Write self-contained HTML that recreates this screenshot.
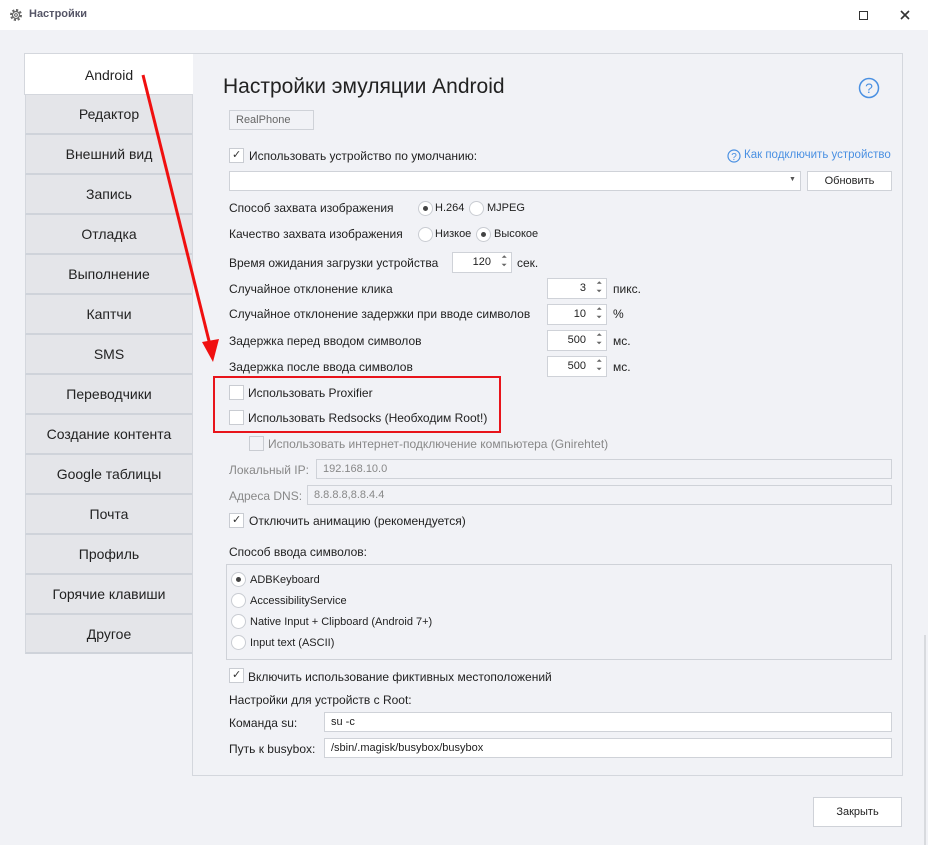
<!DOCTYPE html>
<html><head><meta charset="utf-8"><style>
*{box-sizing:border-box;margin:0;padding:0}
body{width:928px;height:845px;background:#f1f2f6;font-family:"Liberation Sans","DejaVu Sans",sans-serif;font-size:12px;color:#222;position:relative;overflow:hidden}
.a{position:absolute;white-space:nowrap}
.tb{position:absolute;left:0;top:0;width:928px;height:30px;background:#fff}
.tab{position:absolute;left:25px;width:167px;height:40px;background:#e4e5e9;border-bottom:2px solid #cfd3da;border-left:1px solid #d4d7dd;text-align:center;line-height:38px;font-size:14px;color:#222}
.cb{position:absolute;width:15px;height:15px;background:#fff;border:1px solid #c9ccd2}
.cb.c::after{content:"✓";position:absolute;left:2px;top:-1px;font-size:11px;color:#333}
.rb{position:absolute;width:15px;height:15px;border-radius:50%;background:#fff;border:1px solid #c9ccd2}
.rb.c::after{content:"";position:absolute;left:4px;top:4px;width:5px;height:5px;border-radius:50%;background:#444}
.in{position:absolute;height:20px;background:#fff;border:1px solid #cfd2d8;padding-left:6px;line-height:18px;font-size:11px}
.in.d{background:#f1f2f6;color:#888}
.sp{position:absolute;width:60px;height:21px;background:#fff;border:1px solid #cfd2d8;text-align:right;padding-right:20px;line-height:19px;font-size:11px}
.sp::after{content:"⏶\A⏷";white-space:pre;position:absolute;right:4px;top:1px;font-size:7px;line-height:8px;color:#666}
.btn{position:absolute;background:#fff;border:1px solid #cfd2d8;text-align:center;font-size:11px}
</style></head><body>
<div class="tb"></div>
<svg class="a" style="left:9px;top:8px" width="14" height="14" viewBox="0 0 14 14"><circle cx="7" cy="7" r="5" fill="none" stroke="#666" stroke-width="2" stroke-dasharray="2.2 1.7"/><circle cx="7" cy="7" r="3.5" fill="none" stroke="#666" stroke-width="1.2"/><circle cx="7" cy="7" r="1.4" fill="none" stroke="#666" stroke-width="1"/></svg>
<div class="a" style="left:29px;top:8px;font-size:11px;font-weight:bold;color:#556">Настройки</div>
<div class="a" style="left:859px;top:11px;width:9px;height:9px;border:1.5px solid #333"></div>
<svg class="a" style="left:900px;top:10px" width="10" height="10"><path d="M1 1L9 9M9 1L1 9" stroke="#333" stroke-width="1.6"/></svg>

<div class="a" style="left:192px;top:53px;width:711px;height:723px;border:1px solid #d4d7dd;background:#f1f2f6"></div>
<div class="a" style="left:24px;top:53px;width:169px;height:42px;background:#fff;border:1px solid #d4d7dd;border-right:none;text-align:center;line-height:42px;font-size:14px">Android</div>
<div class="tab" style="top:95px">Редактор</div>
<div class="tab" style="top:135px">Внешний вид</div>
<div class="tab" style="top:175px">Запись</div>
<div class="tab" style="top:215px">Отладка</div>
<div class="tab" style="top:255px">Выполнение</div>
<div class="tab" style="top:295px">Каптчи</div>
<div class="tab" style="top:335px">SMS</div>
<div class="tab" style="top:375px">Переводчики</div>
<div class="tab" style="top:415px">Создание контента</div>
<div class="tab" style="top:455px">Google таблицы</div>
<div class="tab" style="top:495px">Почта</div>
<div class="tab" style="top:535px">Профиль</div>
<div class="tab" style="top:575px">Горячие клавиши</div>
<div class="tab" style="top:615px;height:39px">Другое</div>

<div class="a" style="left:223px;top:75px;font-size:21px;color:#222">Настройки эмуляции Android</div>
<svg class="a" style="left:858px;top:77px" width="22" height="22"><circle cx="11" cy="11" r="9.5" fill="none" stroke="#4a90e2" stroke-width="1.5"/><text x="11" y="16" text-anchor="middle" font-size="14" fill="#4a90e2" font-family="Liberation Sans">?</text></svg>
<div class="in d" style="left:229px;top:110px;width:85px;height:20px;color:#666">RealPhone</div>

<div class="cb c" style="left:229px;top:148px"></div>
<div class="a" style="left:249px;top:149px">Использовать устройство по умолчанию:</div>
<svg class="a" style="left:727px;top:149px" width="14" height="14"><circle cx="7" cy="7" r="6" fill="none" stroke="#4a90e2" stroke-width="1.2"/><text x="7" y="11" text-anchor="middle" font-size="10" fill="#4a90e2" font-family="Liberation Sans">?</text></svg>
<div class="a" style="left:744px;top:149px;font-size:11.5px;color:#4a90e2">Как подключить устройство</div>
<div class="in" style="left:229px;top:171px;width:572px;height:20px"></div>
<div class="a" style="left:789px;top:176px;font-size:7px;color:#555">▼</div>
<div class="btn" style="left:807px;top:171px;width:85px;height:20px;line-height:18px">Обновить</div>

<div class="a" style="left:229px;top:201px">Способ захвата изображения</div>
<div class="rb c" style="left:418px;top:201px"></div><div class="a" style="left:435px;top:202px;font-size:11px">H.264</div>
<div class="rb" style="left:469px;top:201px"></div><div class="a" style="left:487px;top:202px;font-size:11px">MJPEG</div>
<div class="a" style="left:229px;top:227px">Качество захвата изображения</div>
<div class="rb" style="left:418px;top:227px"></div><div class="a" style="left:435px;top:228px;font-size:11px">Низкое</div>
<div class="rb c" style="left:476px;top:227px"></div><div class="a" style="left:494px;top:228px;font-size:11px">Высокое</div>
<div class="a" style="left:229px;top:256px">Время ожидания загрузки устройства</div>
<div class="sp" style="left:452px;top:252px">120</div><div class="a" style="left:517px;top:256px">сек.</div>
<div class="a" style="left:229px;top:282px">Случайное отклонение клика</div>
<div class="sp" style="left:547px;top:278px">3</div><div class="a" style="left:613px;top:282px">пикс.</div>
<div class="a" style="left:229px;top:307px">Случайное отклонение задержки при вводе символов</div>
<div class="sp" style="left:547px;top:304px">10</div><div class="a" style="left:613px;top:307px">%</div>
<div class="a" style="left:229px;top:334px">Задержка перед вводом символов</div>
<div class="sp" style="left:547px;top:330px">500</div><div class="a" style="left:613px;top:334px">мс.</div>
<div class="a" style="left:229px;top:360px">Задержка после ввода символов</div>
<div class="sp" style="left:547px;top:356px">500</div><div class="a" style="left:613px;top:360px">мс.</div>

<div class="a" style="left:213px;top:376px;width:288px;height:57px;border:2px solid #e8141b"></div>
<div class="cb" style="left:229px;top:385px"></div><div class="a" style="left:248px;top:386px">Использовать Proxifier</div>
<div class="cb" style="left:229px;top:410px"></div><div class="a" style="left:248px;top:411px">Использовать Redsocks (Необходим Root!)</div>
<div class="cb" style="left:249px;top:436px;background:#f1f2f6"></div><div class="a" style="left:268px;top:437px;color:#888">Использовать интернет-подключение компьютера (Gnirehtet)</div>
<div class="a" style="left:229px;top:463px;color:#888">Локальный IP:</div>
<div class="in d" style="left:316px;top:459px;width:576px">192.168.10.0</div>
<div class="a" style="left:229px;top:489px;color:#888">Адреса DNS:</div>
<div class="in d" style="left:307px;top:485px;width:585px">8.8.8.8,8.8.4.4</div>
<div class="cb c" style="left:229px;top:513px"></div><div class="a" style="left:249px;top:514px">Отключить анимацию (рекомендуется)</div>
<div class="a" style="left:229px;top:545px">Способ ввода символов:</div>
<div class="a" style="left:226px;top:564px;width:666px;height:96px;border:1px solid #cfd2d8"></div>
<div class="rb c" style="left:231px;top:572px"></div><div class="a" style="left:250px;top:574px;font-size:11px">ADBKeyboard</div>
<div class="rb" style="left:231px;top:593px"></div><div class="a" style="left:250px;top:595px;font-size:11px">AccessibilityService</div>
<div class="rb" style="left:231px;top:614px"></div><div class="a" style="left:250px;top:616px;font-size:11px">Native Input + Clipboard (Android 7+)</div>
<div class="rb" style="left:231px;top:635px"></div><div class="a" style="left:250px;top:637px;font-size:11px">Input text (ASCII)</div>
<div class="cb c" style="left:229px;top:668px"></div><div class="a" style="left:248px;top:670px">Включить использование фиктивных местоположений</div>
<div class="a" style="left:229px;top:693px">Настройки для устройств с Root:</div>
<div class="a" style="left:229px;top:716px">Команда su:</div>
<div class="in" style="left:324px;top:712px;width:568px">su -c</div>
<div class="a" style="left:229px;top:742px">Путь к busybox:</div>
<div class="in" style="left:324px;top:738px;width:568px">/sbin/.magisk/busybox/busybox</div>

<div class="btn" style="left:813px;top:797px;width:89px;height:30px;line-height:28px">Закрыть</div>
<div class="a" style="left:924px;top:635px;width:2px;height:210px;background:#d8dade"></div>

<svg class="a" style="left:0;top:0" width="928" height="845"><line x1="143" y1="75" x2="210" y2="345" stroke="#f01010" stroke-width="3"/><polygon points="213,362 202,342 219,339" fill="#f01010"/></svg>
</body></html>
